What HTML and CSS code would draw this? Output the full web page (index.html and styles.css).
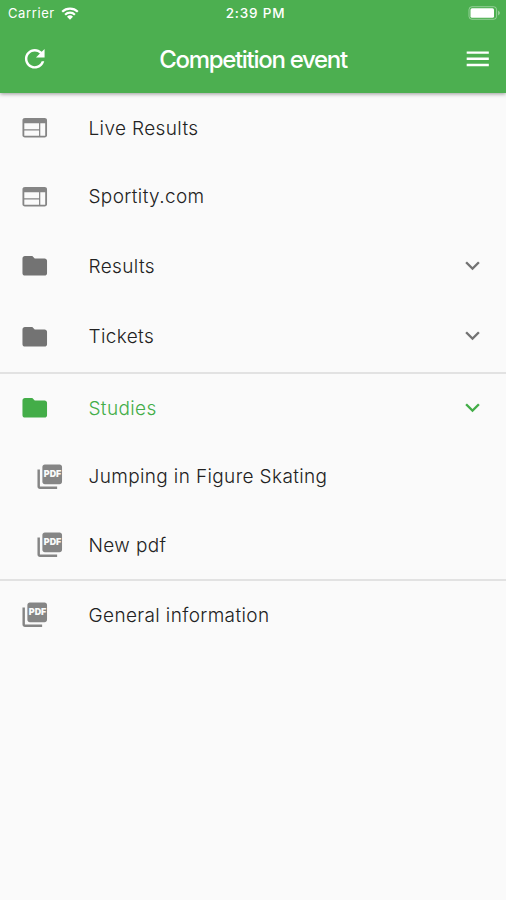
FILE: index.html
```html
<!DOCTYPE html>
<html lang="en">
<head>
    <meta charset="UTF-8">
    <meta name="viewport" content="width=device-width, initial-scale=1.0">
    <title>Competition event</title>
    <link rel="stylesheet" href="styles.css">
</head>
<body>
    <svg class="sprite">
        <symbol id="web" viewBox="0 0 24 24">
            <path fill-rule="evenodd" d="M20 4H4c-1.100 0-2 .7-2 1.800v12.400c0 1.100.9 1.800 2 1.800h16c1.100 0 2-.7 2-1.800V5.800c0-1.100-.9-1.800-2-1.800zM3.500 8.300h12v4.900h-12zM3.500 14.300h12v4.200h-12zM16.500 8.300h4v10.200h-4z"/>
        </symbol>
        <symbol id="folder" viewBox="0 0 24 24">
            <path d="M10 4H4c-1.100 0-2 .9-2 2v12c0 1.100.9 2 2 2h16c1.100 0 2-.9 2-2V8c0-1.100-.9-2-2-2h-8l-2-2z"/>
        </symbol>
        <symbol id="pdf" viewBox="0 0 24 24">
            <path d="M20 2H8c-1.100 0-2 .9-2 2v12c0 1.100.9 2 2 2h12c1.100 0 2-.9 2-2V4c0-1.100-.9-2-2-2zM4 6H2v14c0 1.100.9 2 2 2h14v-2H4V6z"/>
            <text class="pdf-label" x="7.200" y="12.300" textLength="14.200" lengthAdjust="spacingAndGlyphs">PDF</text>
        </symbol>
        <symbol id="down" viewBox="0 0 24 24">
            <path d="M16.590 8.590L12 13.170 7.410 8.590 6 10l6 6 6-6z"/>
        </symbol>
    </svg>

    <div class="header">
        <div class="status">
            <div class="carrier">
                <span>Carrier</span>
                <svg class="wifi" viewBox="0 0 18 13">
                    <path class="arc" d="M1.200 4.700a11.200 11.200 0 0 1 15.600 0M4.100 7.700a7 7 0 0 1 9.800 0"/>
                    <path d="M9 12.800L6 9.800a4.300 4.300 0 0 1 6 0z"/>
                </svg>
            </div>
            <div class="time">2:39 PM</div>
            <div class="power">
                <svg class="battery" viewBox="0 0 33 14">
                    <rect class="case" x="1" y="0.700" width="27.600" height="12.600" rx="3"/>
                    <rect x="2.500" y="2.200" width="23.500" height="9.600" rx="1.500"/>
                    <path class="cap" d="M30 4.500q4 2.500 0 5z"/>
                </svg>
            </div>
        </div>
        <div class="bar">
            <svg class="icon" viewBox="0 0 24 24">
                <path d="M17.650 6.350C16.200 4.900 14.210 4 12 4c-4.420 0-7.990 3.580-7.990 8s3.570 8 7.990 8c3.730 0 6.840-2.550 7.730-6h-2.080c-.82 2.330-3.040 4-5.650 4-3.310 0-6-2.690-6-6s2.690-6 6-6c1.660 0 3.140.69 4.220 1.780L13 11h7V4l-2.350 2.350z"/>
            </svg>
            <h1 class="title">Competition event</h1>
            <svg class="icon" viewBox="0 0 24 24">
                <path d="M3 18h18v-2H3v2zm0-5h18v-2H3v2zm0-7v2h18V6H3z"/>
            </svg>
        </div>
    </div>

    <ul class="list">
        <li class="item">
            <svg class="icon light"><use href="#web"/></svg>
            <span class="name">Live Results</span>
        </li>
        <li class="item">
            <svg class="icon light"><use href="#web"/></svg>
            <span class="name">Sportity.com</span>
        </li>
        <li class="item folder">
            <svg class="icon"><use href="#folder"/></svg>
            <span class="name">Results</span>
            <svg class="arrow"><use href="#down"/></svg>
        </li>
        <li class="item folder">
            <svg class="icon"><use href="#folder"/></svg>
            <span class="name">Tickets</span>
            <svg class="arrow"><use href="#down"/></svg>
        </li>
        <li class="group">
            <div class="item current">
                <svg class="icon"><use href="#folder"/></svg>
                <span class="name">Studies</span>
                <svg class="arrow"><use href="#down"/></svg>
            </div>
            <ul class="sub">
                <li class="item">
                    <svg class="icon light"><use href="#pdf"/></svg>
                    <span class="name">Jumping in Figure Skating</span>
                </li>
                <li class="item">
                    <svg class="icon light"><use href="#pdf"/></svg>
                    <span class="name">New pdf</span>
                </li>
            </ul>
        </li>
        <li class="item">
            <svg class="icon light"><use href="#pdf"/></svg>
            <span class="name">General information</span>
        </li>
    </ul>
</body>
</html>
```
FILE: styles.css
```css
*{
    padding: 0;
    margin: 0;
    box-sizing: border-box;
}

body{
    min-height: 900px;
    background: #fafafa;
    font-family: Inter, "Liberation Sans", sans-serif;
}

ul{
    list-style-type: none;
}

svg{
    display: block;
    flex: none;
    fill: currentColor;
}

.sprite{
    display: none;
}

/* header */
.header{
    height: 93px;
    color: #fff;
    background: #4caf50;
    box-shadow: 0 1px 4px rgba(0, 0, 0, .4);
}

.status{
    display: grid;
    grid-template-columns: 1fr auto 1fr;
    align-items: center;
    height: 26px;
    padding: 0 5px 0 8px;
    font-size: 13px;
}

.carrier{
    display: flex;
    align-items: center;
    gap: 6px;
    letter-spacing: .6px;
}

.wifi{
    width: 18px;
    height: 13px;
}

.arc{
    fill: none;
    stroke: currentColor;
    stroke-width: 2.2;
}

.time{
    padding-left: 2px;
    font-weight: 500;
    font-size: 13.5px;
    letter-spacing: .8px;
}

.power{
    display: flex;
    justify-content: flex-end;
}

.battery{
    width: 33px;
    height: 14px;
}

.case{
    fill: none;
    stroke: #fff;
    stroke-opacity: .4;
}

.cap{
    opacity: .4;
}

.bar{
    display: flex;
    align-items: center;
    height: 66px;
    padding: 0 14px 0 20px;
}

.title{
    flex: 1;
    padding: 1px 6px 0 0;
    font-size: 24px;
    font-weight: 500;
    letter-spacing: -1.3px;
    text-align: center;
}

/* list */
.item{
    display: flex;
    align-items: center;
    height: 68.5px;
    padding: 0 19px 0 20px;
    color: #737373;
}

.list > .item:first-child{
    height: 69px;
}

.icon{
    width: 29.5px;
    height: 29.5px;
}

.light{
    color: #858585;
}

.name{
    flex: 1;
    padding-top: 1px;
    margin-left: 39px;
    font-size: 19px;
    font-weight: 350;
    letter-spacing: .37px;
    color: #222;
}

.arrow{
    width: 29px;
    height: 29px;
    margin-bottom: 1px;
}

.list > .folder{
    height: 70.5px;
}

.group{
    border: 1px solid #e2e2e2;
    border-width: 2px 0;
}

.group .current{
    height: 68.5px;
}

.current,
.current .name{
    color: #43ad48;
}

.sub .item{
    height: 68.5px;
    padding-left: 34.5px;
}

.sub .name{
    margin-left: 24.5px;
}

.list > .item:last-child{
    height: 67px;
}

.pdf-label{
    font-size: 7.6px;
    font-weight: 900;
    fill: #fafafa;
}
```
